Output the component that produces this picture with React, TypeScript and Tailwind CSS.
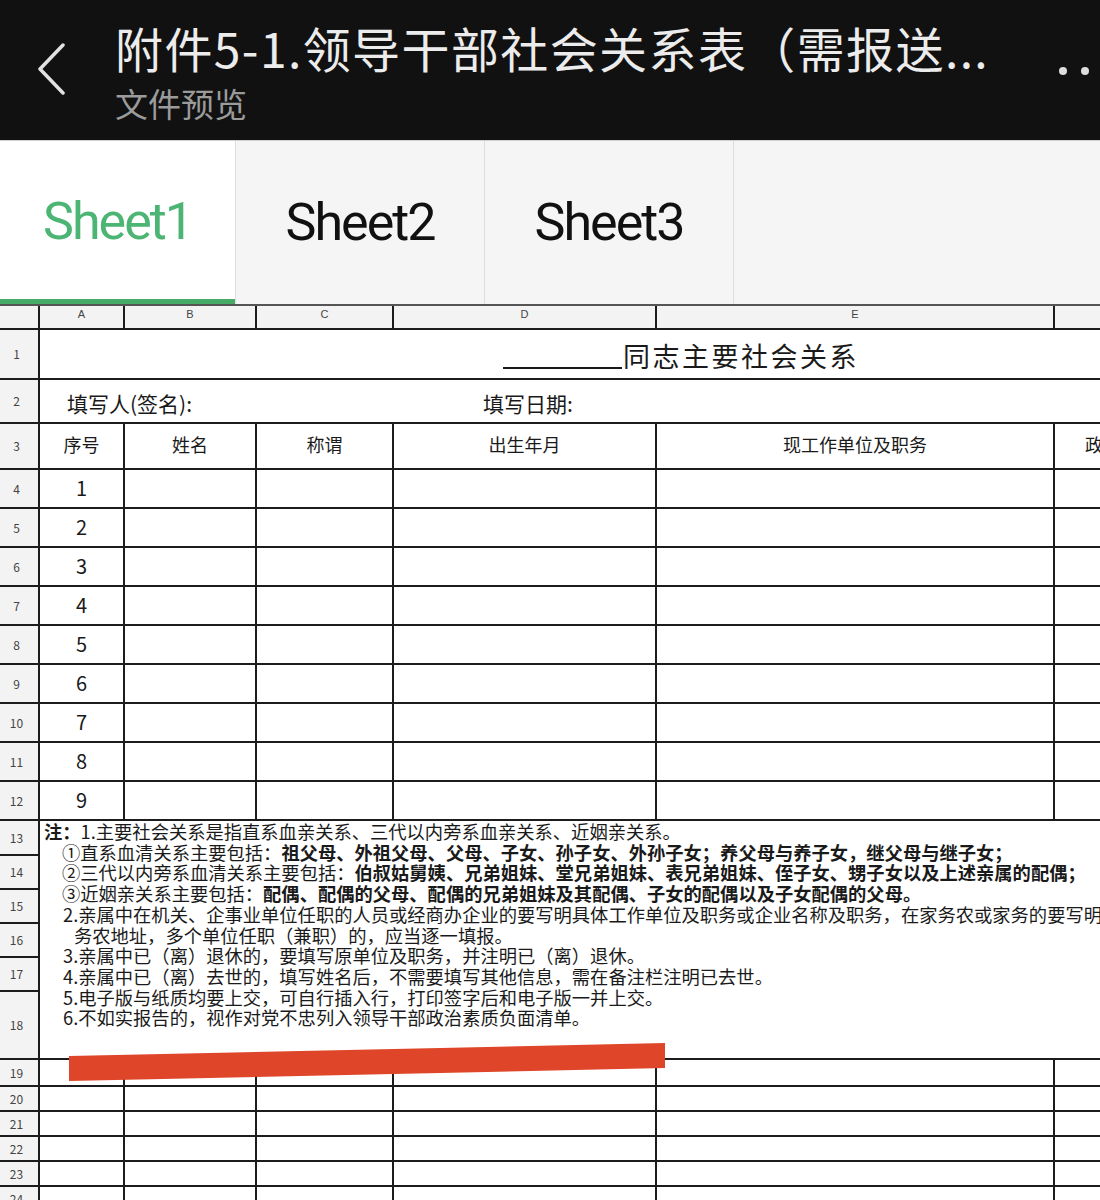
import React from "react";

const CJK = "font-['Noto_Sans_CJK_SC',sans-serif]";
const COLS = ["w-[85px]", "w-[132px]", "w-[137px]", "w-[263px]", "w-[398px]", "flex-1"];
const LETTERS = ["A", "B", "C", "D", "E", ""];
const HEADS = ["序号", "姓名", "称谓", "出生年月", "现工作单位及职务", "政治面貌"];

const RowHead = ({ n }: { n?: number }) => (
  <div className="w-[40px] shrink-0 bg-[#f3f3f3] border-r-2 border-b-2 border-[#1c1c1c] flex items-center justify-center pr-[5px] text-[12px] text-[#444]">
    {n}
  </div>
);

const GridRow = ({ n, h, cells = [] }: { n: number; h: string; cells?: React.ReactNode[] }) => (
  <div className={`flex ${h}`}>
    <RowHead n={n} />
    {COLS.map((w, i) => (
      <div
        key={i}
        className={`${w} shrink-0 min-w-0 border-b-2 border-[#1c1c1c] flex items-center overflow-hidden whitespace-nowrap ${
          i < 5 ? "border-r-2 justify-center" : "pl-[30px]"
        }`}
      >
        {cells[i]}
      </div>
    ))}
  </div>
);

const Header = () => (
  <div className={`h-[140px] bg-[#111111] flex ${CJK}`}>
    <div className="w-[115px] shrink-0 pt-[43px] pl-[38px]">
      <svg width="30" height="54" viewBox="0 0 30 54" fill="none">
        <polyline points="25,2 2,26 25,50" stroke="#e2e2e2" strokeWidth="3.5" strokeLinecap="round" strokeLinejoin="round" />
      </svg>
    </div>
    <div className="flex-1 min-w-0 pt-[19px] overflow-hidden">
      <div className="text-[48px] leading-[56px] tracking-[1.4px] text-[#ececec] whitespace-nowrap">附件5-1.领导干部社会关系表（需报送...</div>
      <div className="mt-[8px] text-[33px] leading-[40px] text-[#9b9b9b]">文件预览</div>
    </div>
    <div className="flex gap-[14px] pt-[67px] pr-[11px]">
      <span className="w-[8px] h-[8px] rounded-full bg-[#dddddd]" />
      <span className="w-[8px] h-[8px] rounded-full bg-[#dddddd]" />
    </div>
  </div>
);

const Tabs = () => (
  <div className="h-[164px] bg-[#f5f5f5] border-t border-[#cfcfcf] flex font-['Roboto',sans-serif] text-[52px] tracking-[-2px]">
    <div className="w-[235px] bg-white border-b-[5px] border-[#46ab66] flex items-center justify-center pt-[4px] text-[#4cb574]">
      Sheet1
    </div>
    <div className="w-[249px] border-l border-[#dedede] flex items-center justify-center text-[#111]">Sheet2</div>
    <div className="w-[250px] border-l border-r border-[#dedede] flex items-center justify-center text-[#111]">Sheet3</div>
  </div>
);

const NOTE_HEADS: [number, string][] = [
  [13, "h-[35px]"],
  [14, "h-[34px]"],
  [15, "h-[34px]"],
  [16, "h-[34px]"],
  [17, "h-[34px]"],
  [18, "h-[68px]"],
];

const Notes = () => (
  <div className="flex">
    <div className="w-[40px] shrink-0 flex flex-col">
      {NOTE_HEADS.map(([n, h]) => (
        <div key={n} className={`${h} flex`}>
          <RowHead n={n} />
        </div>
      ))}
    </div>
    <div className="flex-1 min-w-0 h-[239px] border-b-2 border-[#1c1c1c] overflow-hidden whitespace-nowrap pl-[4px] text-[18.3px] leading-[20.7px] text-[#1a1a1a]">
      <div>
        <b>注：</b>1.主要社会关系是指直系血亲关系、三代以内旁系血亲关系、近姻亲关系。
      </div>
      <div className="pl-[18px]">
        ①直系血清关系主要包括：<b>祖父母、外祖父母、父母、子女、孙子女、外孙子女；养父母与养子女，继父母与继子女；</b>
      </div>
      <div className="pl-[18px]">
        ②三代以内旁系血清关系主要包括：<b>伯叔姑舅姨、兄弟姐妹、堂兄弟姐妹、表兄弟姐妹、侄子女、甥子女以及上述亲属的配偶；</b>
      </div>
      <div className="pl-[18px]">
        ③近姻亲关系主要包括：<b>配偶、配偶的父母、配偶的兄弟姐妹及其配偶、子女的配偶以及子女配偶的父母。</b>
      </div>
      <div className="pl-[19px]">2.亲属中在机关、企事业单位任职的人员或经商办企业的要写明具体工作单位及职务或企业名称及职务，在家务农或家务的要写明</div>
      <div className="pl-[30px]">务农地址，多个单位任职（兼职）的，应当逐一填报。</div>
      <div className="pl-[19px]">3.亲属中已（离）退休的，要填写原单位及职务，并注明已（离）退休。</div>
      <div className="pl-[19px]">4.亲属中已（离）去世的，填写姓名后，不需要填写其他信息，需在备注栏注明已去世。</div>
      <div className="pl-[19px]">5.电子版与纸质均要上交，可自行插入行，打印签字后和电子版一并上交。</div>
      <div className="pl-[19px]">6.不如实报告的，视作对党不忠列入领导干部政治素质负面清单。</div>
    </div>
  </div>
);

const Sheet = () => (
  <div className={`${CJK} text-[#1a1a1a]`}>
    {/* column letters */}
    <div className="flex h-[26px] border-t-2 border-[#555] bg-[#f3f3f3]">
      <div className="w-[40px] shrink-0 border-r-2 border-b-2 border-[#1c1c1c]" />
      {COLS.map((w, i) => (
        <div
          key={i}
          className={`${w} shrink-0 border-b-2 border-[#1c1c1c] flex justify-center text-[11px] text-[#444] font-['Liberation_Sans',sans-serif] ${
            i < 5 ? "border-r-2" : ""
          }`}
        >
          {LETTERS[i]}
        </div>
      ))}
    </div>

    <div className="flex h-[50px]">
      <RowHead n={1} />
      <div className="flex-1 border-b-2 border-[#1c1c1c] flex items-center pl-[463px] pt-[4px] text-[27px] tracking-[2.5px] whitespace-nowrap">
        <span className="inline-block w-[119px] h-[2px] bg-[#1a1a1a] self-end mb-[9px] mr-[1px]" />
        同志主要社会关系
      </div>
    </div>

    <div className="flex h-[44px]">
      <RowHead n={2} />
      <div className="flex-1 border-b-2 border-[#1c1c1c] flex items-center pt-[6px] text-[21px] whitespace-nowrap">
        <span className="pl-[27px] w-[443px]">填写人(签名):</span>
        <span>填写日期:</span>
      </div>
    </div>

    <GridRow
      n={3}
      h="h-[46px]"
      cells={HEADS.map((t) => (
        <span key={t} className="text-[18px] pb-[4px]">
          {t}
        </span>
      ))}
    />

    {[1, 2, 3, 4, 5, 6, 7, 8, 9].map((k) => (
      <GridRow key={k} n={k + 3} h="h-[39px]" cells={[<span className="text-[20px] pb-[2px]">{k}</span>]} />
    ))}

    <Notes />

    <GridRow n={19} h="h-[27px]" />
    {[20, 21, 22, 23, 24].map((n) => (
      <GridRow key={n} n={n} h="h-[25px]" />
    ))}
  </div>
);

export default function App() {
  return (
    <div className="relative w-[1100px] h-[1200px] overflow-hidden bg-white">
      <Header />
      <Tabs />
      <Sheet />
      <svg className="absolute inset-0 pointer-events-none" width="1100" height="1200" viewBox="0 0 1100 1200">
        <polygon points="69,1056 665,1043 665,1068 69,1081" fill="#df4528" />
      </svg>
    </div>
  );
}
